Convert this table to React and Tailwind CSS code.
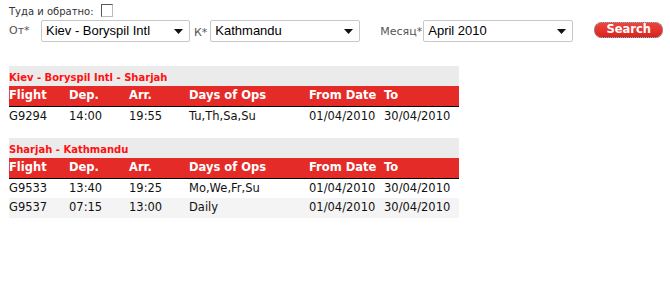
import React from "react";

const routes = [
  {
    title: "Kiev - Boryspil Intl - Sharjah",
    flights: [["G9294", "14:00", "19:55", "Tu,Th,Sa,Su", "01/04/2010", "30/04/2010"]],
  },
  {
    title: "Sharjah - Kathmandu",
    flights: [
      ["G9533", "13:40", "19:25", "Mo,We,Fr,Su", "01/04/2010", "30/04/2010"],
      ["G9537", "07:15", "13:00", "Daily", "01/04/2010", "30/04/2010"],
    ],
  },
];

const headers = ["Flight", "Dep.", "Arr.", "Days of Ops", "From Date", "To"];

const Select = ({ value, width }) => (
  <div
    className={`${width} h-[22px] flex items-center justify-between border border-[#c8c8c8] rounded-[2px] bg-white pl-[4px] pr-[6px] font-['Liberation_Sans',Arial,sans-serif] text-[13px] text-black`}
  >
    <span>{value}</span>
    <svg width="9" height="5" viewBox="0 0 9 5">
      <path d="M0 0h9L4.5 5z" fill="#111" />
    </svg>
  </div>
);

const App = () => {
  return (
    <div className="w-[670px] h-[286px] bg-white font-['DejaVu_Sans',Verdana,sans-serif]">
      <div className="pl-[9px] pt-[3px]">
        <div className="flex items-end h-[14px] text-[10px] text-[#333]">
          <span className="leading-none">Туда и обратно:</span>
          <span className="ml-[7px] w-[12px] h-[13px] border border-[#bbb] border-t-[#555] border-l-[#555] bg-white" />
        </div>
        <div className="flex mt-[3px] h-[22px] text-[11px] text-[#555]">
          <span className="w-[32px] self-center">От*</span>
          <Select value="Kiev - Boryspil Intl" width="w-[149px]" />
          <span className="ml-[4px] mr-[3px] self-end pb-[1px]">К*</span>
          <Select value="Kathmandu" width="w-[150px]" />
          <span className="ml-[20px] mr-[1px] self-end pb-[2px]">Месяц*</span>
          <Select value="April 2010" width="w-[150px]" />
          <button className="ml-[21px] mt-[2px] w-[69px] h-[16px] rounded-[8px] bg-gradient-to-b from-[#f04540] to-[#d81f1a] text-white font-bold text-[11.5px] leading-none outline outline-1 outline-dotted outline-[#5cc7d9] -outline-offset-1">
            Search
          </button>
        </div>
      </div>

      <div className="pl-[9px] mt-[24px] flex flex-col gap-[12px]">
        {routes.map((r) => (
          <table key={r.title} className="w-[450px] border-collapse text-[11.5px] table-fixed">
            <colgroup>
              <col className="w-[60px]" />
              <col className="w-[60px]" />
              <col className="w-[60px]" />
              <col className="w-[120px]" />
              <col className="w-[75px]" />
              <col className="w-[75px]" />
            </colgroup>
            <thead>
              <tr className="bg-[#ebebeb] h-[20px]">
                <td colSpan={6} className="text-[#ff1010] font-bold text-[10px] pt-[3px] p-0 leading-none align-middle">
                  {r.title}
                </td>
              </tr>
              <tr className="bg-[#e52b27] h-[20px] border-b border-black">
                {headers.map((h) => (
                  <th key={h} className="text-left text-white font-bold p-0 whitespace-nowrap">
                    {h}
                  </th>
                ))}
              </tr>
            </thead>
            <tbody>
              {r.flights.map((f, j) => (
                <tr key={f[0]} className={`h-[20px] ${j % 2 ? "bg-[#f4f4f4]" : "bg-white"}`}>
                  {f.map((c, i) => (
                    <td key={i} className="p-0 text-[#111] whitespace-nowrap">
                      {c}
                    </td>
                  ))}
                </tr>
              ))}
            </tbody>
          </table>
        ))}
      </div>
    </div>
  );
};

export default App;
